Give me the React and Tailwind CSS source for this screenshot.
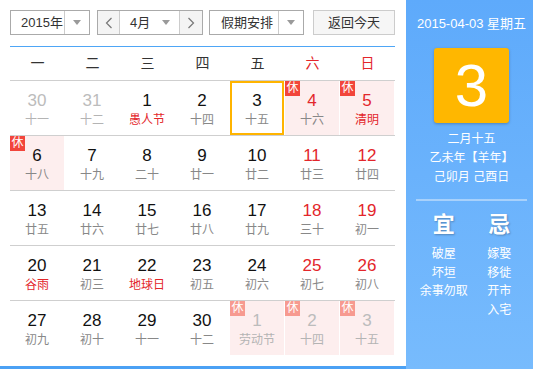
import { useState } from "react";

const weekdays = [
  { t: "一" }, { t: "二" }, { t: "三" }, { t: "四" }, { t: "五" },
  { t: "六", red: true }, { t: "日", red: true },
];

// kind: prev / next = other month, today, rest = 休
const weeks = [
  [
    { d: 30, l: "十一", kind: "prev" },
    { d: 31, l: "十二", kind: "prev" },
    { d: 1, l: "愚人节", fest: true },
    { d: 2, l: "十四" },
    { d: 3, l: "十五", today: true },
    { d: 4, l: "十六", rest: true },
    { d: 5, l: "清明", rest: true, fest: true },
  ],
  [
    { d: 6, l: "十八", rest: true },
    { d: 7, l: "十九" },
    { d: 8, l: "二十" },
    { d: 9, l: "廿一" },
    { d: 10, l: "廿二" },
    { d: 11, l: "廿三" },
    { d: 12, l: "廿四" },
  ],
  [
    { d: 13, l: "廿五" },
    { d: 14, l: "廿六" },
    { d: 15, l: "廿七" },
    { d: 16, l: "廿八" },
    { d: 17, l: "廿九" },
    { d: 18, l: "三十" },
    { d: 19, l: "初一" },
  ],
  [
    { d: 20, l: "谷雨", fest: true },
    { d: 21, l: "初三" },
    { d: 22, l: "地球日", fest: true },
    { d: 23, l: "初五" },
    { d: 24, l: "初六" },
    { d: 25, l: "初七" },
    { d: 26, l: "初八" },
  ],
  [
    { d: 27, l: "初九" },
    { d: 28, l: "初十" },
    { d: 29, l: "十一" },
    { d: 30, l: "十二" },
    { d: 1, l: "劳动节", kind: "next", rest: true },
    { d: 2, l: "十四", kind: "next", rest: true },
    { d: 3, l: "十五", kind: "next", rest: true },
  ],
];

const yi = ["破屋", "坏垣", "余事勿取"];
const ji = ["嫁娶", "移徙", "开市", "入宅"];

function Arrow() {
  return (
    <span className="w-0 h-0 border-l-[4px] border-r-[4px] border-t-[5px] border-l-transparent border-r-transparent border-t-[#9a9a9a]" />
  );
}

function Chevron({ right }) {
  return (
    <svg width="8" height="12" viewBox="0 0 8 12" fill="none">
      <polyline
        points={right ? "1.5,1 6.5,6 1.5,11" : "6.5,1 1.5,6 6.5,11"}
        stroke="#777"
        strokeWidth="1.2"
      />
    </svg>
  );
}

function DayCell({ day, col }) {
  const other = day.kind === "prev" || day.kind === "next";
  const weekend = col >= 5;
  let numColor = "text-[#111]";
  if (other) numColor = "text-[#bcbcbc]";
  else if (weekend) numColor = "text-[#e3262b]";
  let lunarColor = "text-[#888]";
  if (other) lunarColor = "text-[#b4b4b4]";
  else if (day.fest) lunarColor = "text-[#e3262b]";

  return (
    <div className="relative h-[54px] w-[55px]">
      <div
        className={`relative h-[54px] w-[54px] text-center ${
          day.rest ? "bg-[#fdeeee]" : ""
        } ${
          day.today
            ? "border-2 border-[#ffb400] pt-[8px]"
            : "pt-[10px]"
        }`}
      >
        {day.rest && (
          <span
            className={`absolute left-0 top-0 h-[15px] w-[15px] text-[12px] leading-[15px] text-white ${
              other ? "bg-[#f79a90]" : "bg-[#f2453b]"
            }`}
          >
            休
          </span>
        )}
        <div className={`text-[17px] leading-[20px] ${numColor}`}>{day.d}</div>
        <div className={`mt-[1px] text-[12px] leading-[16px] ${lunarColor}`}>{day.l}</div>
      </div>
    </div>
  );
}

export default function App() {
  const [month] = useState("4月");

  return (
    <div className="flex h-[369px] w-[533px] overflow-hidden bg-white font-['Liberation_Sans','Noto_Sans_CJK_SC',sans-serif]">
      {/* Left: calendar */}
      <div className="flex w-[406px] shrink-0 flex-col border-b-[3px] border-[#4ba1f4] pl-[10px] pr-[11px] pt-[10px]">
        {/* Toolbar */}
        <div className="mb-[11px] flex h-[25px] text-[13px] text-[#333]">
          <div className="flex h-[25px] w-[80px] border border-[#aaa]">
            <span className="flex flex-1 items-center pl-[10px]">2015年</span>
            <span className="flex w-[25px] items-center justify-center border-l border-[#ccc]">
              <Arrow />
            </span>
          </div>

          <div className="ml-[7px] flex h-[25px] w-[106px] border border-[#aaa]">
            <span className="flex w-[22px] items-center justify-center border-r border-[#ccc] bg-[#f4f4f4]">
              <Chevron />
            </span>
            <span className="flex flex-1 items-center pl-[10px]">
              <span className="flex-1">{month}</span>
              <span className="mr-[9px] flex items-center">
                <Arrow />
              </span>
            </span>
            <span className="flex w-[23px] items-center justify-center border-l border-[#ccc] bg-[#f4f4f4]">
              <Chevron right />
            </span>
          </div>

          <div className="ml-[6px] flex h-[25px] w-[95px] border border-[#aaa]">
            <span className="flex flex-1 items-center pl-[11px]">假期安排</span>
            <span className="flex w-[25px] items-center justify-center border-l border-[#ccc]">
              <Arrow />
            </span>
          </div>

          <button className="ml-[9px] flex h-[25px] w-[82px] items-center justify-center border border-[#ccc] bg-[#f6f6f6] text-[13px] text-[#333]">
            返回今天
          </button>
        </div>

        {/* Weekday header */}
        <div className="grid h-[34px] grid-cols-7 border-t border-[#4ea6f6] text-[14px]">
          {weekdays.map((w) => (
            <div
              key={w.t}
              className={`flex items-center justify-center ${w.red ? "text-[#e3262b]" : "text-[#333]"}`}
            >
              {w.t}
            </div>
          ))}
        </div>

        {/* Weeks */}
        {weeks.map((week, i) => (
          <div key={i} className="grid h-[55px] grid-cols-7 border-t border-[#cfcfcf]">
            {week.map((day, j) => (
              <DayCell key={j} day={day} col={j} />
            ))}
          </div>
        ))}
      </div>

      {/* Right: today detail */}
      <div className="flex w-[131px] shrink-0 flex-col bg-linear-to-b from-[#5eaafb] to-[#77bbfd] pt-[16px] text-white">
        <div className="text-center text-[13px] leading-[16px]">2015-04-03 星期五</div>
        <div className="mx-auto mt-[16px] flex h-[75px] w-[75px] items-center justify-center rounded-[3px] bg-[#ffb700] text-[60px] leading-none shadow-[0_1px_3px_rgba(0,0,0,0.25)]">
          3
        </div>
        <div className="mt-[7px] text-center text-[12px] leading-[19px]">
          <div>二月十五</div>
          <div>乙未年【羊年】</div>
          <div>己卯月 己酉日</div>
        </div>
        <div className="mx-[10px] mt-[12px] h-[2px] bg-[#a8d1fb]" />
        <div className="mx-[10px] mt-[11px] grid grid-cols-2 text-center">
          <div>
            <div className="text-[22px] font-bold leading-[26px] [text-shadow:1px_1px_2px_rgba(0,0,0,0.25)]">宜</div>
            <div className="mt-[7px] text-[12px] leading-[18.5px]">
              {yi.map((t) => (
                <div key={t}>{t}</div>
              ))}
            </div>
          </div>
          <div>
            <div className="text-[22px] font-bold leading-[26px] [text-shadow:1px_1px_2px_rgba(0,0,0,0.25)]">忌</div>
            <div className="mt-[7px] text-[12px] leading-[18.5px]">
              {ji.map((t) => (
                <div key={t}>{t}</div>
              ))}
            </div>
          </div>
        </div>
      </div>
    </div>
  );
}
